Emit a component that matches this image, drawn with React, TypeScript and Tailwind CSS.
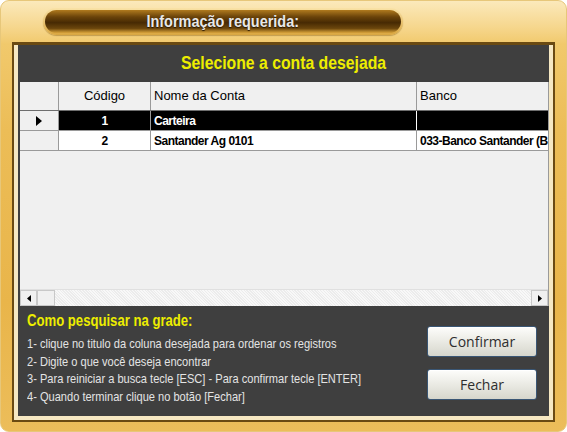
const sans = "font-['Liberation_Sans',Arial,sans-serif]";

const rows = [
  { code: "1", name: "Carteira", bank: "", selected: true },
  { code: "2", name: "Santander Ag 0101", bank: "033-Banco Santander (Brasil) S.A.", selected: false },
];

const help = [
  "1- clique no titulo da coluna desejada para ordenar os registros",
  "2- Digite o que você deseja encontrar",
  "3- Para reiniciar a busca tecle [ESC] - Para confirmar tecle [ENTER]",
  "4- Quando terminar clique no botão [Fechar]",
];

const Button = ({ label }: { label: string }) => (
  <button className="w-[110px] h-[31px] rounded-[3px] border border-[#3a5674] bg-[linear-gradient(to_bottom,#fdfdfb_0%,#ecece6_45%,#d6d6cc_100%)] shadow-[inset_0_1px_0_#fff] text-[14px] text-[#2e2e2e] font-['Open_Sans',sans-serif]">
    {label}
  </button>
);

export default function App() {
  return (
    <div className="w-[567px] h-[432px] bg-white">
      <div className="w-[567px] h-[432px] rounded-[9px] border border-[#e7c77a] bg-[linear-gradient(to_bottom,#fbe9bb_0%,#f6d78e_6%,#f1c96c_10%,#ecbd57_30%,#e9b54a_70%,#ecbd5a_100%)] flex flex-col px-[11px] pb-[9px]">
        {/* title strip */}
        <div className="h-[41px] flex items-start pt-[7px] pl-[31px]">
          <div className="w-[360px] h-[27px] rounded-full p-[2px] bg-[linear-gradient(to_bottom,#f9e2a6,#d9a640)] shadow-[0_1px_1px_rgba(120,80,10,0.4)]">
            <div className="w-full h-full rounded-full bg-[linear-gradient(to_bottom,#b07a1e_0%,#6a430a_30%,#472a03_55%,#6b460c_80%,#d9a33a_100%)] flex items-center justify-center">
              <span className={`${sans} inline-block scale-x-[0.85] font-bold text-[17px] text-[#e8e8e8] [text-shadow:0_1px_1px_#2a1800] whitespace-nowrap`}>
                Informação requerida:
              </span>
            </div>
          </div>
        </div>

        {/* dark panel */}
        <div className="flex-1 min-w-0 border-t-[3px] border-x-[2px] border-b-[2px] border-[#6a4a12] flex">
          <div className="flex-1 min-w-0 border-l-[4px] border-r-[4px] border-b-[4px] border-[#f6e8c2] bg-[#3f3f3f] flex flex-col">
            <div className="h-[37px] flex items-center justify-center">
              <span className={`${sans} inline-block scale-x-[0.83] font-bold text-[19px] text-[#eded00] whitespace-nowrap`}>
                Selecione a conta desejada
              </span>
            </div>

            {/* grid */}
            <div className={`ml-[2px] h-[224px] min-w-0 overflow-hidden bg-[#f0f0f0] flex flex-col border-r border-[#9a9a9a] text-[13px] text-black ${sans}`}>
              <div className="flex h-[29px] border-b border-[#6e6e6e] items-center">
                <div className="w-[39px] shrink-0 h-full border-r border-[#9a9a9a]" />
                <div className="w-[92px] shrink-0 h-full border-r border-[#9a9a9a] flex items-center justify-center">Código</div>
                <div className="w-[266px] shrink-0 h-full border-r border-[#9a9a9a] flex items-center pl-[3px]">Nome da Conta</div>
                <div className="flex-1 min-w-0 h-full flex items-center pl-[3px]">Banco</div>
              </div>
              {rows.map((r) => (
                <div
                  key={r.code}
                  className={`flex h-[20px] border-b border-[#9a9a9a] font-bold text-[12px] tracking-[-0.5px] ${r.selected ? "bg-black text-white" : "bg-white text-black"}`}
                >
                  <div className="w-[39px] shrink-0 h-full border-r border-[#9a9a9a] bg-[#f0f0f0] flex items-center justify-center">
                    {r.selected && (
                      <svg width="8" height="10" viewBox="0 0 8 10">
                        <path d="M1 0 L7 5 L1 10 Z" fill="#000" />
                      </svg>
                    )}
                  </div>
                  <div className="w-[92px] shrink-0 h-full border-r border-[#9a9a9a] flex items-center justify-center">{r.code}</div>
                  <div className={`w-[266px] shrink-0 h-full border-r ${r.selected ? "border-white" : "border-[#9a9a9a]"} flex items-center pl-[3px]`}>{r.name}</div>
                  <div className="flex-1 min-w-0 h-full flex items-center pl-[3px] overflow-hidden whitespace-nowrap">{r.bank}</div>
                </div>
              ))}
              <div className="flex-1" />
              {/* horizontal scrollbar */}
              <div className="h-[17px] flex bg-[repeating-linear-gradient(45deg,#f8f8f8_0,#f8f8f8_1px,#ececec_1px,#ececec_2px)] border-t border-[#e0e0e0]">
                <div className="w-[17px] h-full bg-[#f0f0f0] border border-[#c8c8c8] flex items-center justify-center">
                  <svg width="4" height="7" viewBox="0 0 4 7">
                    <path d="M4 0 L0 3.5 L4 7 Z" fill="#000" />
                  </svg>
                </div>
                <div className="w-[18px] h-full bg-[#f0f0f0] border border-[#c8c8c8]" />
                <div className="flex-1" />
                <div className="w-[17px] h-full bg-[#f0f0f0] border border-[#c8c8c8] flex items-center justify-center">
                  <svg width="4" height="7" viewBox="0 0 4 7">
                    <path d="M0 0 L4 3.5 L0 7 Z" fill="#000" />
                  </svg>
                </div>
              </div>
            </div>

            {/* help + buttons */}
            <div className="flex-1 min-w-0 flex pl-[9px] pr-[12px]">
              <div className="flex-1 min-w-0 pt-[2px]">
                <div className={`${sans} inline-block origin-left scale-x-[0.82] font-bold text-[16px] text-[#eded00] leading-[20px] whitespace-nowrap`}>
                  Como pesquisar na grade:
                </div>
                <div className={`${sans} text-[13.5px] text-[#e4e4e4] leading-[17.5px] mt-[3px]`}>
                  {help.map((h) => (
                    <div key={h} className="origin-left scale-x-[0.82] whitespace-nowrap">
                      {h}
                    </div>
                  ))}
                </div>
              </div>
              <div className="shrink-0 flex flex-col gap-[12px] pt-[20px]">
                <Button label="Confirmar" />
                <Button label="Fechar" />
              </div>
            </div>
          </div>
        </div>
      </div>
    </div>
  );
}
